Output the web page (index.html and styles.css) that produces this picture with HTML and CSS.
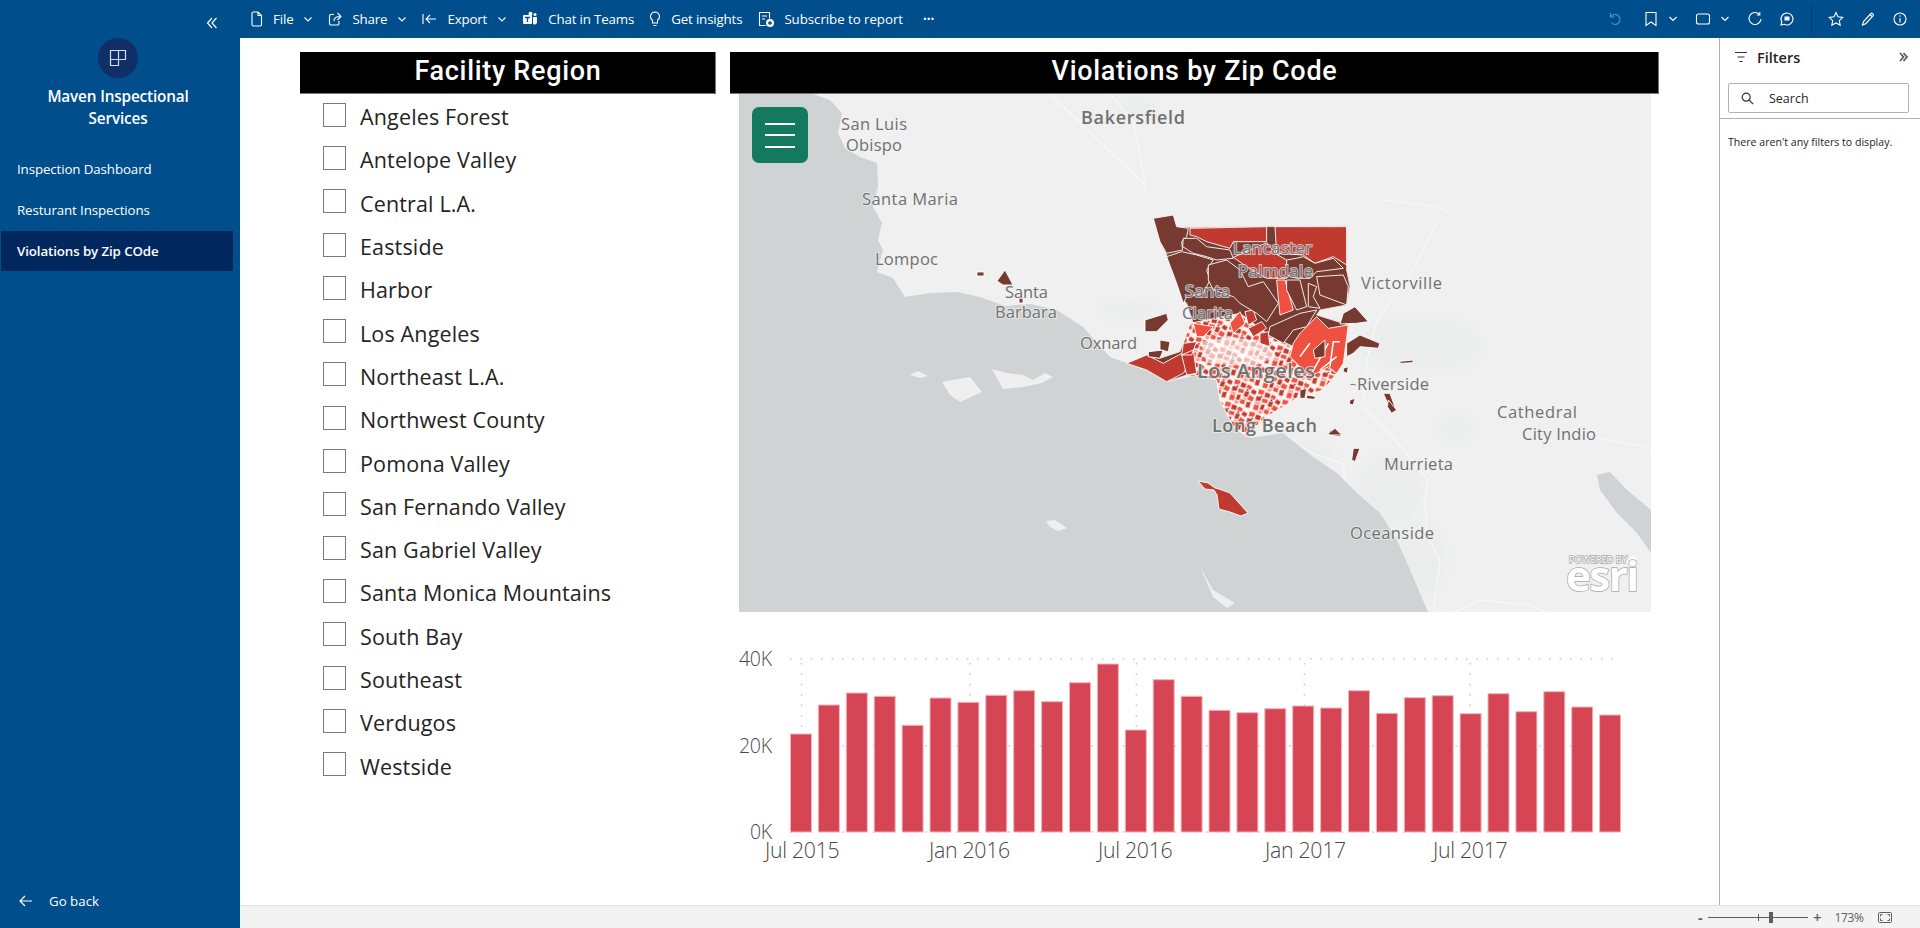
FILE: index.html
```html
<!DOCTYPE html>
<html lang="en">
<head>
  <meta charset="UTF-8" />
  <title>Violations by Zip Code</title>
  <link rel="stylesheet" href="styles.css">
</head>
<body>
<div class="app">

  <aside class="sidebar">
    <div class="collapse">
      <svg width="12" height="12" viewBox="0 0 12 12"><path d="M6 1 1.500 6 6 11M10.500 1 6 6l4.500 5"/></svg>
    </div>
    <div class="brand-logo">
      <svg width="18" height="18" viewBox="0 0 18 18"><path d="M1.500 1.500h15v9h-7v6h-8zM9.500 1.500v9M1.500 10.500h8"/></svg>
    </div>
    <div class="brand-name">Maven Inspectional Services</div>
    <nav class="nav">
      <a class="nav-item">Inspection Dashboard</a>
      <a class="nav-item">Resturant Inspections</a>
      <a class="nav-item active">Violations by Zip COde</a>
    </nav>
    <a class="go-back">
      <svg width="14" height="12" viewBox="0 0 14 12"><path d="M6 1 1 6l5 5M1 6h12"/></svg>
      Go back
    </a>
  </aside>

  <div class="main">
    <header class="toolbar">
      <div class="tool t-file">
        <svg width="12" height="16" viewBox="0 0 12 16"><path d="M2.500 1h4.500l3.500 3.500V13.500a1.500 1.500 0 0 1-1.500 1.500H2.500A1.500 1.500 0 0 1 1 13.500v-11A1.500 1.500 0 0 1 2.500 1zM7 1v3.500h3.500"/></svg>
        <span>File</span>
        <svg class="chev" width="8" height="5" viewBox="0 0 8 5"><path d="M.5.5 4 4 7.500.5"/></svg>
      </div>
      <div class="tool t-share">
        <svg width="14" height="16" viewBox="0 0 14 16"><path d="M6 3.500H3A1.500 1.500 0 0 0 1.500 5v7.500A1.500 1.500 0 0 0 3 14h6.500a1.500 1.500 0 0 0 1.500-1.500V10M6 10c0-3 2-4.500 6-4.500M9.500 2 13 5.500 9.500 9"/></svg>
        <span>Share</span>
        <svg class="chev" width="8" height="5" viewBox="0 0 8 5"><path d="M.5.5 4 4 7.500.5"/></svg>
      </div>
      <div class="tool t-export">
        <svg width="15" height="14" viewBox="0 0 15 14"><path d="M1 2v10M14 7H4M8 3 4 7l4 4"/></svg>
        <span>Export</span>
        <svg class="chev" width="8" height="5" viewBox="0 0 8 5"><path d="M.5.5 4 4 7.500.5"/></svg>
      </div>
      <div class="tool t-teams">
        <svg width="16" height="16" viewBox="0 0 16 16"><rect class="solid" x="1" y="4" width="9" height="9" rx="1"/><circle class="solid" cx="8.500" cy="2.800" r="2"/><circle class="solid" cx="13" cy="3.500" r="1.500"/><path class="solid" d="M11 6h4v5c0 1.500-1 2.500-2.500 2.500-1 0-1.500-.5-1.500-1z"/><path class="cut" d="M3 6.500h5M5.500 6.500v4.500"/></svg>
        <span>Chat in Teams</span>
      </div>
      <div class="tool t-insights">
        <svg width="12" height="16" viewBox="0 0 12 16"><path d="M6 1a4.500 4.500 0 0 0-2.500 8.200V12h5V9.200A4.500 4.500 0 0 0 6 1zM4.500 14.500h3"/></svg>
        <span>Get insights</span>
      </div>
      <div class="tool t-subscribe">
        <svg width="17" height="17" viewBox="0 0 17 17"><path d="M7.500 14.500H1.500v-13h10v6M4 5h5M4 8h3"/><circle class="solid" cx="12" cy="12" r="4"/><path class="cut" d="M12 10v4M10 12h4"/></svg>
        <span>Subscribe to report</span>
      </div>
      <div class="tool more">&middot;&middot;&middot;</div>

      <div class="tool-icons">
        <svg class="dim" width="20" height="16" viewBox="0 0 20 16"><path d="M5.500 2v4h4M5.700 5.800a5 5 0 1 1 .3 5.700"/></svg>
        <svg class="g16" width="20" height="16" viewBox="0 0 20 16"><path d="M5 1.500h10v13l-5-3.500-5 3.500z"/></svg>
        <svg class="g2" width="20" height="16" viewBox="0 0 20 16"><path d="M6.500 6 10 9.500 13.500 6"/></svg>
        <svg class="g10" width="20" height="16" viewBox="0 0 20 16"><rect x="3.500" y="3" width="13" height="10" rx="2"/></svg>
        <svg class="g2" width="20" height="16" viewBox="0 0 20 16"><path d="M6.500 6 10 9.500 13.500 6"/></svg>
        <svg class="g10" width="20" height="16" viewBox="0 0 20 16"><path d="M14.500 3.500A6 6 0 1 0 16 8M14.800 1v3h-3"/></svg>
        <svg class="g12" width="20" height="16" viewBox="0 0 20 16"><path d="M10 2a6 6 0 1 1-2.800 11.300L4 14l.8-3A6 6 0 0 1 10 2z"/><rect class="solid" x="7.500" y="5.500" width="5" height="4"/></svg>
        <span class="tool-divider"></span>
        <svg class="g14" width="20" height="16" viewBox="0 0 20 16"><path d="m10 1.500 2 4.300 4.700.6-3.400 3.200.9 4.700-4.200-2.300-4.200 2.300.9-4.700-3.400-3.200 4.700-.6z"/></svg>
        <svg class="g12" width="20" height="16" viewBox="0 0 20 16"><path d="m4.500 14 1-3.500 7.500-8c1-1 3.200 1 2.200 2.200l-7.500 8zM12 3.500 14.500 6"/></svg>
        <svg class="g12" width="20" height="16" viewBox="0 0 20 16"><circle cx="10" cy="8" r="6"/><path d="M10 7v4.500M10 4.300v1.400"/></svg>
      </div>
    </header>

    <div class="workspace">
      <main class="canvas">
        <section class="slicer">
          <h2 class="visual-title">Facility Region</h2>
          <ul class="slicer-list">
            <li><span class="check"></span>Angeles Forest</li>
            <li><span class="check"></span>Antelope Valley</li>
            <li><span class="check"></span>Central L.A.</li>
            <li><span class="check"></span>Eastside</li>
            <li><span class="check"></span>Harbor</li>
            <li><span class="check"></span>Los Angeles</li>
            <li><span class="check"></span>Northeast L.A.</li>
            <li><span class="check"></span>Northwest County</li>
            <li><span class="check"></span>Pomona Valley</li>
            <li><span class="check"></span>San Fernando Valley</li>
            <li><span class="check"></span>San Gabriel Valley</li>
            <li><span class="check"></span>Santa Monica Mountains</li>
            <li><span class="check"></span>South Bay</li>
            <li><span class="check"></span>Southeast</li>
            <li><span class="check"></span>Verdugos</li>
            <li><span class="check"></span>Westside</li>
          </ul>
        </section>

        <section class="zip-panel">
          <h2 class="visual-title">Violations by Zip Code</h2>

          <div class="map-wrap">
            <!-- viewBox is in page pixels so the traced points stay readable -->
            <svg class="map" width="912" height="518" viewBox="739 94 912 518">
              <defs>
                <pattern id="cells" width="78" height="72" patternUnits="userSpaceOnUse" patternTransform="rotate(23)">
                  <rect width="78" height="72" fill="#fff4f0"/>
                  <path fill="#ef5040" d="M2 3 18 1 20 13 4 17ZM44 2 58 4 56 15 42 13ZM22 24 38 22 40 33 24 35ZM60 30 76 32 74 46 58 44ZM6 50 20 48 22 64 8 66ZM40 52 54 50 56 62 42 64Z"/>
                  <path fill="#c13a30" d="M23 4 38 3 40 16 25 18ZM62 10 76 12 74 24 60 22ZM3 24 18 22 19 34 5 38ZM44 24 56 22 56 38 44 40ZM26 42 36 40 37 56 26 58ZM60 52 72 50 74 66 62 68Z"/>
                  <path fill="#f9a08c" d="M5 40 20 40 22 46 5 47ZM26 60 38 60 36 70 26 70ZM46 42 56 43 55 49 46 49Z"/>
                  <path fill="#763a30" d="M46 16 52 17 51 21 46 21ZM14 18 19 17 19 21 14 21ZM68 48 72 48 72 50 68 50Z"/>
                </pattern>
              </defs>

              <rect x="739" y="94" width="912" height="518" fill="#f0f0f0"/>

              <g class="urban">
                <ellipse cx="1420" cy="345" rx="60" ry="28"/>
                <ellipse cx="1390" cy="490" rx="32" ry="34"/>
                <ellipse cx="1420" cy="560" rx="26" ry="40"/>
                <ellipse cx="1300" cy="455" rx="34" ry="16"/>
                <ellipse cx="1455" cy="428" rx="16" ry="14"/>
                <ellipse cx="1130" cy="310" rx="30" ry="8"/>
                <ellipse cx="1135" cy="110" rx="20" ry="12"/>
              </g>

              <path class="road" d="M1050 94 1146 186M1110 94l24 28 12 70M1383 200l50 6 20 8M1437 223l-20 40-40 57-10 40-3 40M1363 407l30 30 35 43-3 17 2 37 13 27-7 52M1287 437l27 17 30 10v16l10 16M1597 438l54 10M1455 612l25-12 50 5 15 7"/>

              <path class="water" d="M739 94H813L830 100 842 113 838 133 845 148 860 157 877 163 878 187 873 207 882 223 878 240 883 250 877 272 893 278 905 297 930 293 957 292 980 297 1005 306 1030 304 1057 310 1083 327 1110 357 1127 363 1147 370 1167 382 1197 375 1217 380 1230 403 1240 430 1250 438 1283 433 1313 457 1337 473 1357 493 1380 513 1397 540 1413 577 1428 612H739Z"/>
              <path class="water" d="M1597 475 1610 472 1627 490 1651 510V553L1637 533 1617 513 1600 490Z"/>

              <g class="island">
                <path d="M910 375 918 371 928 376 920 378Z"/>
                <path d="M942 382 970 377 982 392 960 402 950 395Z"/>
                <path d="M992 369 1007 373 1023 375 1033 380 1045 373 1053 377 1042 383 1023 387 1003 389 998 380Z"/>
                <path d="M1046 521 1055 520 1067 528 1058 531 1050 527Z"/>
                <path d="M1200 567 1213 590 1235 603 1227 608 1213 597Z"/>
              </g>

              <g class="regions">
                <path class="red" d="M1198 481 1208 483 1215 488 1219 489 1230 493 1238 502 1248 513 1241 516 1230 512 1219 509 1217 495 1214 490 1205 489Z"/>
                <path class="brown" d="M997 281 1005 270 1013 285 1003 285ZM977 272h7v4h-7ZM1019 298h4v5h-4Z"/>

                <!-- traced at 3x, hence the scale -->
                <g transform="translate(1000 200) scale(.3333)">
                  <path class="county" d="M460 55 520 45 530 80 570 82 1040 78 1040 210 1050 260 1040 315 960 330 950 345 1045 375 1030 490 1010 520 970 570 900 590 800 650 740 710 700 680 660 600 650 540 560 525 500 545 440 510 380 490 440 465 480 475 540 455 550 430 580 370 560 310 550 300 530 250 500 165 480 125Z"/>
                  <path class="red" d="M570 85 800 80V125H700L690 145 620 125 590 110 570 105Z"/>
                  <path class="red" d="M825 80H1040V195L1000 170 945 190 910 165 830 160Z"/>
                  <path class="red" d="M800 128 830 163 860 180 860 235 800 235 740 200 700 172Z"/>
                  <path class="red" d="M380 490 440 465 490 490 545 460 575 480 550 520 500 545 440 510Z"/>
                  <path class="tint" d="M570 370 720 340 800 400 880 440 1010 520 970 570 900 590 800 650 740 710 700 680 660 600 650 540 560 520 550 430Z"/>
                  <path class="pale" d="M600 425 700 410 800 430 830 470 760 500 620 490Z"/>
                  <path class="bright" d="M830 240 855 240 880 330 840 345Z"/>
                  <path class="bright" d="M900 400 950 350 985 385 1045 375 1030 490 1010 520 985 500 930 530 870 470 880 430Z"/>
                  <path class="bright" d="M580 370 640 380 610 410 590 410ZM690 370 720 335 735 370 700 400Z"/>
                  <path class="vein" d="M900 470 930 430M935 520 985 430M990 500 1000 425 1020 425M960 510 1010 470"/>
                  <path class="red" d="M735 335 760 330 770 360 745 375ZM745 385 785 365 800 385 760 410ZM780 400 805 395 810 440 780 430ZM550 430 590 425 575 465 545 465ZM545 465 580 450 590 520 560 525Z"/>
                  <path class="brown" d="M460 55 520 45 530 80 565 85 560 110 545 125 548 150 500 160 480 125Z"/>
                  <path class="brown" d="M550 115 590 115 620 140 690 150 700 175 650 180 620 170 580 160 548 140Z"/>
                  <path class="brown" d="M500 170 545 155 590 165 640 180 620 210 630 240 610 280 560 290 550 310 530 250Z"/>
                  <path class="brown" d="M625 195 680 180 720 210 745 260 790 245 835 310 800 365 770 340 720 310 700 290 640 270 625 240Z"/>
                  <path class="brown" d="M860 180 890 175 910 170 945 190 1000 175 1030 205 950 215 930 235 890 235 860 225Z"/>
                  <path class="brown" d="M950 230 1030 225 1045 260 1040 315 960 285Z"/>
                  <path class="brown" d="M860 240 900 240 920 320 890 330 860 270ZM925 250 950 260 940 290 960 325 925 320Z"/>
                  <path class="brown" d="M810 380 900 340 950 330 920 380 880 390 850 430 805 405Z"/>
                  <path class="brown" d="M1030 340 1065 320 1105 365 1070 370 1020 372Z"/>
                  <path class="brown" d="M1040 430 1080 405 1140 430 1135 445 1080 440 1060 460 1040 470Z"/>
                  <path class="brown" d="M435 360 500 340 505 360 470 395 435 395Z"/>
                  <path class="brown" d="M480 420 510 425 505 455 480 450ZM445 455 490 450 480 475 445 470Z"/>
                  <path class="brown" d="M940 450 975 420 975 470 945 475Z"/>
                  <path class="brown" d="M1150 580 1170 580 1190 635 1170 625ZM1050 600 1065 595 1060 615 1048 612ZM990 690 1025 700 1020 710 985 705ZM1060 750 1080 745 1070 780 1055 780ZM900 570 920 565 915 595 900 595ZM920 585 950 590 940 598 920 596ZM1190 485 1240 480 1238 488 1205 490ZM1050 550 1070 553 1068 558 1050 555ZM1030 505 1045 500 1042 520 1030 515Z"/>
                </g>
                <g transform="translate(1180 400) scale(.3333)">
                  <path class="brown" d="M445 100 465 85 485 105 450 105ZM520 145 540 145 525 185 515 180ZM625 0 650 30 635 40 622 20Z"/>
                </g>
              </g>

              <g class="labels">
                <text x="841" y="130" textLength="66">San Luis</text>
                <text x="846" y="151" textLength="56">Obispo</text>
                <text class="strong" x="1081" y="124" textLength="104">Bakersfield</text>
                <text x="862" y="205" textLength="96">Santa Maria</text>
                <text x="875" y="265" textLength="63">Lompoc</text>
                <text x="1005" y="298" textLength="43">Santa</text>
                <text x="995" y="318" textLength="62">Barbara</text>
                <text x="1080" y="349" textLength="57">Oxnard</text>
                <text x="1233" y="254" textLength="79">Lancaster</text>
                <text x="1238" y="277" textLength="75">Palmdale</text>
                <text x="1361" y="289" textLength="81">Victorville</text>
                <text x="1185" y="297" textLength="45">Santa</text>
                <text x="1182" y="319" textLength="51">Clarita</text>
                <text class="big" x="1197" y="378" textLength="118">Los Angeles</text>
                <text x="1357" y="390" textLength="72">Riverside</text>
                <text class="strong" x="1212" y="432" textLength="105">Long Beach</text>
                <text x="1497" y="418" textLength="80">Cathedral</text>
                <text x="1522" y="440" textLength="74">City Indio</text>
                <text x="1384" y="470" textLength="69">Murrieta</text>
                <text x="1350" y="539" textLength="84">Oceanside</text>
              </g>

              <g class="esri">
                <text class="esri-small" x="1569" y="563" textLength="58">POWERED BY</text>
                <circle cx="1633" cy="560" r="3.500"/>
                <text class="esri-word" x="1566" y="591" textLength="73">esri</text>
              </g>
            </svg>
            <button class="map-menu">
              <span></span><span></span><span></span>
            </button>
          </div>

          <svg class="chart" width="929" height="270" viewBox="730 612 929 270">
            <g class="grid">
              <path d="M790 659H1620M790 745.700H1620M790 832H1620"/>
              <path d="M801.600 663V832M970 663V832M1136.400 663V832M1304.400 663V832M1470 663V832"/>
            </g>
            <g class="bars">
              <rect x="790.500" y="734" width="21" height="98"/>
              <rect x="818.400" y="705" width="21" height="127"/>
              <rect x="846.300" y="693" width="21" height="139"/>
              <rect x="874.200" y="696.300" width="21" height="135.700"/>
              <rect x="902.100" y="725.300" width="21" height="106.700"/>
              <rect x="930" y="698" width="21" height="134"/>
              <rect x="957.900" y="702.300" width="21" height="129.700"/>
              <rect x="985.800" y="695.300" width="21" height="136.700"/>
              <rect x="1013.700" y="690.700" width="21" height="141.300"/>
              <rect x="1041.600" y="701.700" width="21" height="130.300"/>
              <rect x="1069.500" y="682.700" width="21" height="149.300"/>
              <rect x="1097.400" y="664" width="21" height="168"/>
              <rect x="1125.300" y="730" width="21" height="102"/>
              <rect x="1153.200" y="679.700" width="21" height="152.300"/>
              <rect x="1181.100" y="696.300" width="21" height="135.700"/>
              <rect x="1209" y="710.300" width="21" height="121.700"/>
              <rect x="1236.900" y="712.700" width="21" height="119.300"/>
              <rect x="1264.800" y="708.700" width="21" height="123.300"/>
              <rect x="1292.700" y="706" width="21" height="126"/>
              <rect x="1320.600" y="708" width="21" height="124"/>
              <rect x="1348.500" y="690.700" width="21" height="141.300"/>
              <rect x="1376.400" y="713.300" width="21" height="118.700"/>
              <rect x="1404.300" y="697.700" width="21" height="134.300"/>
              <rect x="1432.200" y="695.700" width="21" height="136.300"/>
              <rect x="1460.100" y="713.700" width="21" height="118.300"/>
              <rect x="1488" y="693.700" width="21" height="138.300"/>
              <rect x="1515.900" y="711.700" width="21" height="120.300"/>
              <rect x="1543.800" y="691.700" width="21" height="140.300"/>
              <rect x="1571.700" y="707" width="21" height="125"/>
              <rect x="1599.600" y="715" width="21" height="117"/>
            </g>
            <g class="axis">
              <text x="739" y="666">40K</text>
              <text x="739" y="753">20K</text>
              <text x="750" y="839">0K</text>
              <text class="axis-date" x="765" y="858">Jul 2015</text>
              <text class="axis-date" x="929" y="858">Jan 2016</text>
              <text class="axis-date" x="1098" y="858">Jul 2016</text>
              <text class="axis-date" x="1265" y="858">Jan 2017</text>
              <text class="axis-date" x="1433" y="858">Jul 2017</text>
            </g>
          </svg>
        </section>
      </main>

      <aside class="filters">
        <div class="filters-head">
          <svg width="14" height="12" viewBox="0 0 14 12"><path d="M1 1.500h12M3.500 6h7M5.500 10.500h3"/></svg>
          <span class="filters-title">Filters</span>
          <svg class="filters-chev" width="9" height="10" viewBox="0 0 9 10"><path d="M1 1 4.500 5 1 9M4.500 1 8 5 4.500 9"/></svg>
        </div>
        <div class="filters-search">
          <svg width="13" height="13" viewBox="0 0 13 13"><circle cx="5.200" cy="5.200" r="4"/><path d="m8.200 8.200 4 4"/></svg>
          <span>Search</span>
        </div>
        <p class="filters-empty">There aren't any filters to display.</p>
      </aside>
    </div>

    <footer class="status">
      <span class="zoom-minus">-</span>
      <div class="zoom-track"><i class="zoom-tick"></i><i class="zoom-thumb"></i></div>
      <span class="zoom-plus">+</span>
      <span class="zoom-value">173%</span>
      <svg class="zoom-fit" width="14" height="11" viewBox="0 0 14 11"><rect x=".5" y=".5" width="13" height="10" rx="1"/><path d="M2.500 4.500v-2h2M9.500 2.500h2v2M11.500 6.500v2h-2M4.500 8.500h-2v-2"/></svg>
    </footer>
  </div>
</div>
</body>
</html>
```

FILE: styles.css
```css
* {
  box-sizing: border-box;
}
body {
  margin: 0;
  font-family: "Open Sans", "Noto Sans", sans-serif;
  color: #252423;
  background: #fff;
  overflow: hidden;
}
.app {
  display: flex;
  width: 1920px;
  height: 928px;
}

/* left nav */
.sidebar {
  width: 240px;
  flex: none;
  display: flex;
  flex-direction: column;
  background: #004e8c;
  color: #fff;
}
.sidebar svg {
  fill: none;
  stroke: #fff;
  stroke-width: 1.2;
}
.collapse {
  height: 38px;
  padding: 12px 0 0 206px;
}
.brand-logo {
  width: 40px;
  height: 40px;
  margin-left: 98px;
  display: flex;
  align-items: center;
  justify-content: center;
  border-radius: 50%;
  background: #0f2f66;
}
.brand-logo svg {
  stroke: #d5deea;
}
.brand-name {
  margin: 7px 0 0 23px;
  width: 190px;
  font-size: 15.3px;
  font-weight: 600;
  line-height: 22px;
  letter-spacing: -0.15px;
  text-align: center;
}
.nav {
  margin-top: 20px;
  display: flex;
  flex-direction: column;
  gap: 1px;
}
.nav-item {
  height: 40px;
  margin: 0 7px 0 1px;
  padding-left: 16px;
  font-size: 13.300px;
  line-height: 40px;
  letter-spacing: -0.1px;
}
.nav-item.active {
  background: #00285f;
  font-weight: 600;
}
.go-back {
  margin-top: auto;
  margin-bottom: 18px;
  padding-left: 19px;
  display: flex;
  align-items: center;
  gap: 16px;
  font-size: 13.300px;
}

/* top bar */
.main {
  flex: 1;
  min-width: 0;
  display: flex;
  flex-direction: column;
}
.toolbar {
  height: 38px;
  flex: none;
  padding: 0 10px 0 11px;
  display: flex;
  align-items: center;
  background: #004e8c;
  color: #fff;
  font-size: 13.300px;
}
.toolbar svg {
  fill: none;
  stroke: #fff;
  stroke-width: 1.1;
  flex: none;
}
.toolbar .solid {
  fill: #fff;
  stroke: none;
}
.toolbar .cut {
  stroke: #004e8c;
  stroke-width: 1.3;
}
.tool {
  display: flex;
  align-items: center;
  gap: 10px;
  margin-right: 16px;
  letter-spacing: -0.15px;
  white-space: nowrap;
}
.tool .chev {
  margin-left: 1px;
}
.t-teams {
  margin-right: 15px;
}
.t-insights {
  margin-right: 16px;
}
.t-subscribe {
  gap: 9px;
  margin-right: 20px;
  letter-spacing: -0.05px;
}
.more {
  font-weight: 700;
  letter-spacing: 0;
}
.tool-icons {
  margin-left: auto;
  display: flex;
  align-items: center;
}
.tool-icons .dim {
  opacity: .35;
}
.g2 { margin-left: 2px; }
.g10 { margin-left: 10px; }
.g12 { margin-left: 12px; }
.g14 { margin-left: 14px; }
.g16 { margin-left: 16px; }
.tool-divider {
  width: 1px;
  height: 28px;
  margin-left: 14px;
  background: #003a6c;
}

.workspace {
  flex: 1;
  min-height: 0;
  display: flex;
}

/* report canvas */
.canvas {
  width: 1479px;
  padding: 14px 0 0 60px;
  display: flex;
  gap: 14px;
}
.visual-title {
  height: 42px;
  margin: 0;
  background: #000;
  color: #fff;
  font-family: Roboto, sans-serif;
  font-size: 27px;
  font-weight: 500;
  line-height: 39px;
  letter-spacing: .7px;
  text-align: center;
  box-shadow: inset -1px -1px 0 #777;
}
.slicer {
  width: 416px;
}
.slicer-list {
  list-style: none;
  margin: 1px 0 0;
  padding: 0 0 0 23px;
  color: #252423;
  font-size: 21.500px;
}
.slicer-list li {
  height: 43.3px;
  display: flex;
  align-items: center;
  gap: 14px;
  letter-spacing: .15px;
}
.check {
  width: 23px;
  height: 24px;
  flex: none;
  margin-top: -4px;
  border: 1px solid #7a7a7a;
}
.zip-panel {
  width: 929px;
}
.map-wrap {
  position: relative;
  width: 912px;
  height: 518px;
  margin-left: 9px;
}
.map {
  display: block;
}
.map-menu {
  position: absolute;
  left: 13px;
  top: 13px;
  width: 56px;
  height: 56px;
  padding: 0 13px;
  display: flex;
  flex-direction: column;
  justify-content: center;
  gap: 9.500px;
  border: none;
  border-radius: 7px;
  background: #147a5f;
}
.map-menu span {
  height: 2px;
  background: #fff;
}
.urban {
  fill: #ebecec;
  filter: blur(4px);
}
.road {
  fill: none;
  stroke: #fbfbfb;
  stroke-width: 1.200;
  opacity: .75;
  filter: blur(.4px);
}
.water {
  fill: #cfd3d4;
  filter: blur(.4px);
}
.island {
  fill: #efefef;
  filter: blur(.4px);
}
.regions {
  filter: blur(.5px);
}
.regions path {
  stroke: #fff;
  stroke-width: .9px;
  stroke-linejoin: round;
  vector-effect: non-scaling-stroke;
}
.regions .county {
  fill: #763a30;
  stroke: #f8dcd6;
}
.regions .brown { fill: #763a30; }
.regions .red { fill: #c13a30; }
.regions .bright { fill: #ef5040; }
.regions .tint { fill: url(#cells); }
.regions .pale {
  fill: rgba(255, 255, 255, .6);
  stroke: none;
}
.regions .vein {
  fill: none;
  stroke-width: 1.500px;
}
.labels text {
  font-size: 16.500px;
  fill: #6f7172;
  stroke: rgba(240, 240, 240, .7);
  stroke-width: 2px;
  paint-order: stroke;
}
.labels .strong {
  font-size: 18px;
  font-weight: 600;
}
.labels .big {
  font-size: 20px;
  font-weight: 600;
}
.esri text {
  fill: #fff;
  stroke: #a9a9a9;
  stroke-width: 1.500px;
  paint-order: stroke;
}
.esri circle {
  fill: #fff;
}
.esri-small {
  font-size: 9.500px;
}
.esri-word {
  font-size: 42px;
  font-weight: 700;
}
.chart {
  display: block;
}
.grid path {
  fill: none;
  stroke: #c8c8c8;
  stroke-width: 1.500;
  stroke-dasharray: 1.500 8.900;
}
.bars rect {
  fill: #d64554;
  stroke: #f2b4ba;
  stroke-width: 1;
}
.axis text {
  font-size: 19.500px;
  font-weight: 300;
  fill: #4a4846;
  letter-spacing: -.3px;
}
.axis .axis-date {
  font-size: 21.300px;
}

/* filter pane */
.filters {
  flex: 1;
  border-left: 1px solid #b3b3b3;
}
.filters svg {
  fill: none;
  stroke: #333;
  stroke-width: 1.200;
  flex: none;
}
.filters-head {
  height: 38px;
  padding: 0 11px 0 14px;
  display: flex;
  align-items: center;
  gap: 9px;
}
.filters-title {
  font-size: 14.500px;
  font-weight: 600;
}
.filters-head .filters-chev {
  margin-left: auto;
  margin-right: 1px;
  stroke: #605e5c;
  stroke-width: 1.800;
}
.filters-search {
  height: 30px;
  margin: 7px 11px 0 8px;
  padding-left: 12px;
  display: flex;
  align-items: center;
  gap: 15px;
  border: 1px solid #b3b3b3;
  border-radius: 2px;
  font-size: 12.500px;
}
.filters-empty {
  margin: 5px 0 0;
  padding: 14px 0 0 8px;
  border-top: 1px solid #b3b3b3;
  font-size: 10.600px;
  line-height: 18px;
}

/* bottom zoom bar */
.status {
  height: 23px;
  flex: none;
  display: flex;
  align-items: center;
  padding-left: 1458px;
  background: #f3f3f3;
  border-top: 1px solid #e1e1e1;
  color: #605e5c;
}
.zoom-minus {
  width: 10px;
  font-size: 14px;
  font-weight: 700;
}
.zoom-track {
  position: relative;
  width: 100px;
  height: 1px;
  background: #605e5c;
}
.zoom-tick {
  position: absolute;
  left: 50px;
  top: -3px;
  width: 1px;
  height: 7px;
  background: #605e5c;
}
.zoom-thumb {
  position: absolute;
  left: 61px;
  top: -5px;
  width: 4px;
  height: 11px;
  background: #605e5c;
}
.zoom-plus {
  margin-left: 5px;
  font-size: 15px;
  font-weight: 600;
}
.zoom-value {
  margin-left: 13px;
  font-size: 12px;
  letter-spacing: -.4px;
}
.zoom-fit {
  margin-left: 15px;
  fill: none;
  stroke: #605e5c;
}
```
